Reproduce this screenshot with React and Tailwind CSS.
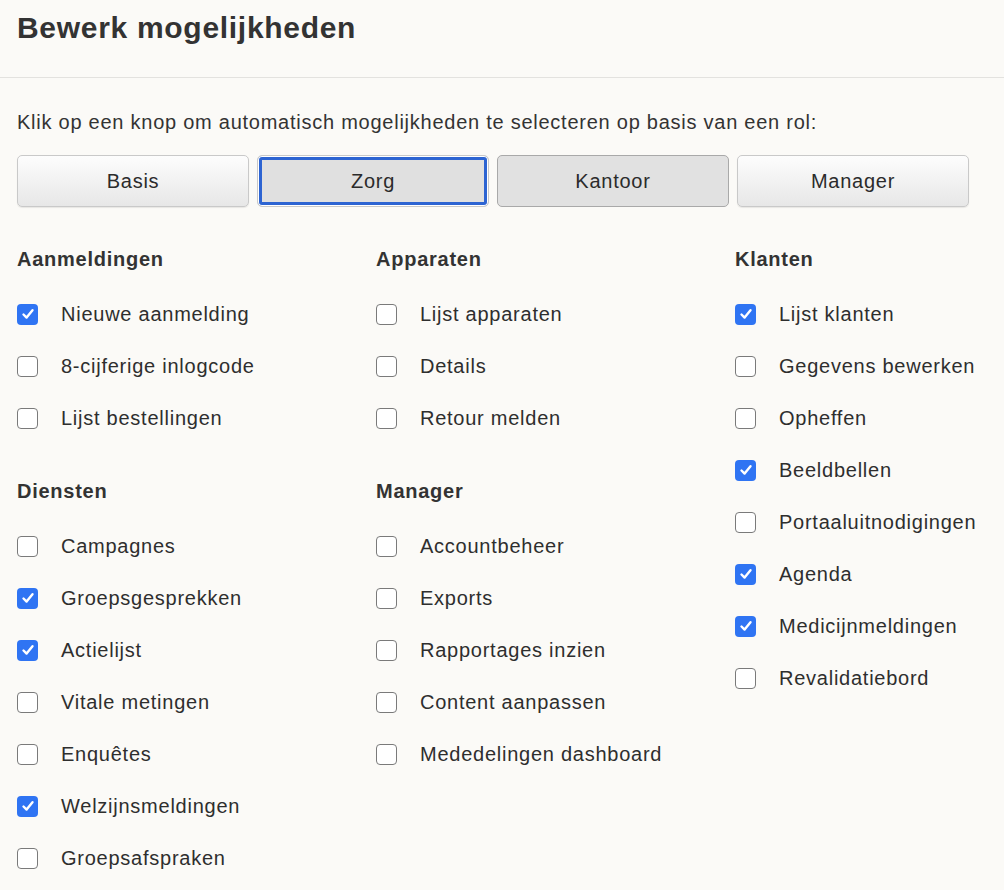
import React from 'react';

const COLUMNS = [
  [
    {
      title: 'Aanmeldingen',
      items: [
        ['Nieuwe aanmelding', true],
        ['8-cijferige inlogcode', false],
        ['Lijst bestellingen', false],
      ],
    },
    {
      title: 'Diensten',
      items: [
        ['Campagnes', false],
        ['Groepsgesprekken', true],
        ['Actielijst', true],
        ['Vitale metingen', false],
        ['Enquêtes', false],
        ['Welzijnsmeldingen', true],
        ['Groepsafspraken', false],
      ],
    },
  ],
  [
    {
      title: 'Apparaten',
      items: [
        ['Lijst apparaten', false],
        ['Details', false],
        ['Retour melden', false],
      ],
    },
    {
      title: 'Manager',
      items: [
        ['Accountbeheer', false],
        ['Exports', false],
        ['Rapportages inzien', false],
        ['Content aanpassen', false],
        ['Mededelingen dashboard', false],
      ],
    },
  ],
  [
    {
      title: 'Klanten',
      items: [
        ['Lijst klanten', true],
        ['Gegevens bewerken', false],
        ['Opheffen', false],
        ['Beeldbellen', true],
        ['Portaaluitnodigingen', false],
        ['Agenda', true],
        ['Medicijnmeldingen', true],
        ['Revalidatiebord', false],
      ],
    },
  ],
];

const Checkbox = ({ checked }) =>
  checked ? (
    <span className="w-[21px] h-[21px] rounded-[4px] bg-[#2f74f3] flex items-center justify-center shrink-0">
      <svg width="14" height="14" viewBox="0 0 14 14" fill="none">
        <path d="M2.5 7.5 L5.6 10.6 L11.5 3.2" stroke="#fff" strokeWidth="2.4" strokeLinecap="round" strokeLinejoin="round" />
      </svg>
    </span>
  ) : (
    <span className="w-[21px] h-[21px] rounded-[4px] border-[1.5px] border-[#7a7a7a] bg-white shrink-0" />
  );

const RoleButton = ({ label, variant }) => {
  const styles = {
    plain: 'border-[#c9c9c9] bg-gradient-to-b from-[#fdfdfd] to-[#e7e7e7] shadow-[0_1px_1px_rgba(0,0,0,0.08)]',
    pressed: 'border-[#a9a9a9] bg-[#e1e1e1]',
    focus: 'border-[#c9c9c9] bg-[#e0e0e0] shadow-[inset_0_0_0_1px_#fff,inset_0_0_0_4px_#2d64d2]',
  };
  return (
    <button
      className={`w-[232px] h-[52px] rounded-[5px] border text-[20px] tracking-[0.75px] text-[#2b2b2b] ${styles[variant]}`}
    >
      {label}
    </button>
  );
};

export default function App() {
  return (
    <div
      className="min-h-[890px] bg-[#fbfaf7] text-[#333]"
      style={{ fontFamily: '"Liberation Sans", Arial, sans-serif' }}
    >
      <div className="h-[78px] border-b border-[#e3e2df] px-[17px] pt-[8px]">
        <h1 className="text-[30px] font-semibold leading-[40px] text-[#333] tracking-[0.7px]">Bewerk mogelijkheden</h1>
      </div>

      <div className="px-[17px] pt-[31px]">
        <p className="text-[20px] leading-[26px] tracking-[0.75px]">
          Klik op een knop om automatisch mogelijkheden te selecteren op basis van een rol:
        </p>

        <div className="flex gap-2 mt-[20px]">
          <RoleButton label="Basis" variant="plain" />
          <RoleButton label="Zorg" variant="focus" />
          <RoleButton label="Kantoor" variant="pressed" />
          <RoleButton label="Manager" variant="plain" />
        </div>

        <div className="grid grid-cols-[359px_359px_1fr] mt-[40px]">
          {COLUMNS.map((sections, ci) => (
            <div key={ci} className="flex flex-col gap-[35px]">
              {sections.map((s) => (
                <div key={s.title}>
                  <h3 className="text-[20px] font-bold leading-[24px] tracking-[0.75px]">{s.title}</h3>
                  <ul className="mt-[17px]">
                    {s.items.map(([label, checked]) => (
                      <li key={label} className="h-[52px] flex items-center gap-[23px]">
                        <Checkbox checked={checked} />
                        <span className="text-[20px] tracking-[0.75px] text-[#2e2e2e]">{label}</span>
                      </li>
                    ))}
                  </ul>
                </div>
              ))}
            </div>
          ))}
        </div>
      </div>
    </div>
  );
}
